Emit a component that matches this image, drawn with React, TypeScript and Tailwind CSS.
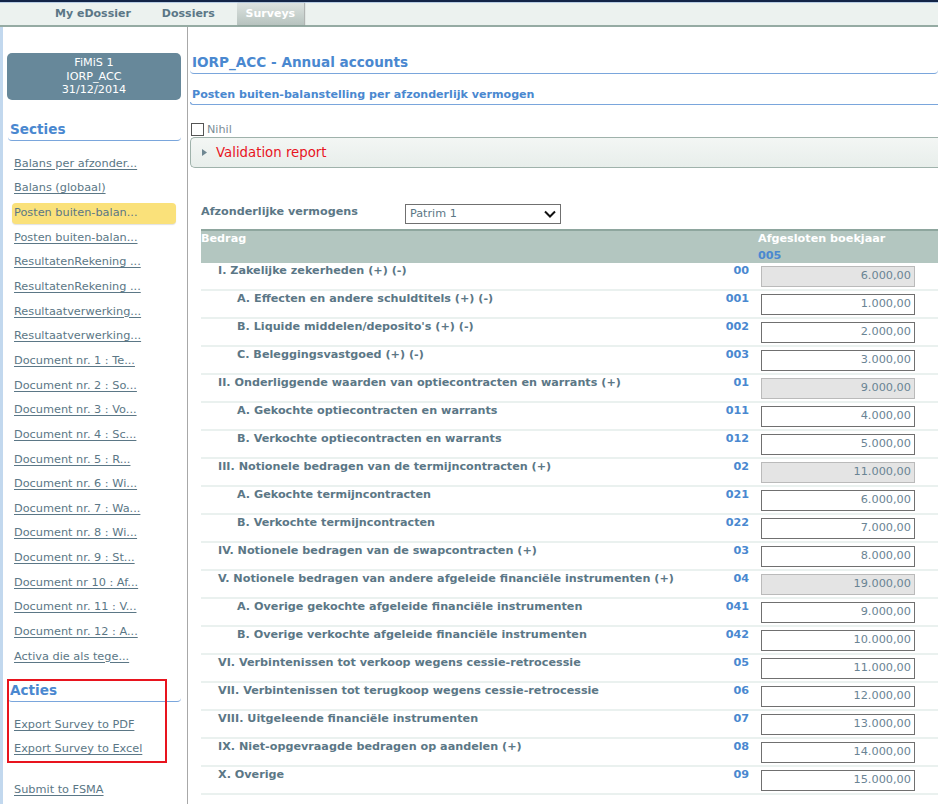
import type { ReactElement } from 'react'

const font = { fontFamily: '"DejaVu Sans", Verdana, sans-serif' }

const sections: string[] = [
  'Balans per afzonder...',
  'Balans (globaal)',
  'Posten buiten-balan...',
  'Posten buiten-balan...',
  'ResultatenRekening ...',
  'ResultatenRekening ...',
  'Resultaatverwerking...',
  'Resultaatverwerking...',
  'Document nr. 1 : Te...',
  'Document nr. 2 : So...',
  'Document nr. 3 : Vo...',
  'Document nr. 4 : Sc...',
  'Document nr. 5 : R...',
  'Document nr. 6 : Wi...',
  'Document nr. 7 : Wa...',
  'Document nr. 8 : Wi...',
  'Document nr. 9 : St...',
  'Document nr 10 : Af...',
  'Document nr. 11 : V...',
  'Document nr. 12 : A...',
  'Activa die als tege...',
]

type Row = { label: string; code: string; value: string; level: 1 | 2; computed?: boolean }

const rows: Row[] = [
  { label: 'I. Zakelijke zekerheden (+) (-)', code: '00', value: '6.000,00', level: 1, computed: true },
  { label: 'A. Effecten en andere schuldtitels (+) (-)', code: '001', value: '1.000,00', level: 2 },
  { label: "B. Liquide middelen/deposito's (+) (-)", code: '002', value: '2.000,00', level: 2 },
  { label: 'C. Beleggingsvastgoed (+) (-)', code: '003', value: '3.000,00', level: 2 },
  { label: 'II. Onderliggende waarden van optiecontracten en warrants (+)', code: '01', value: '9.000,00', level: 1, computed: true },
  { label: 'A. Gekochte optiecontracten en warrants', code: '011', value: '4.000,00', level: 2 },
  { label: 'B. Verkochte optiecontracten en warrants', code: '012', value: '5.000,00', level: 2 },
  { label: 'III. Notionele bedragen van de termijncontracten (+)', code: '02', value: '11.000,00', level: 1, computed: true },
  { label: 'A. Gekochte termijncontracten', code: '021', value: '6.000,00', level: 2 },
  { label: 'B. Verkochte termijncontracten', code: '022', value: '7.000,00', level: 2 },
  { label: 'IV. Notionele bedragen van de swapcontracten (+)', code: '03', value: '8.000,00', level: 1 },
  { label: 'V. Notionele bedragen van andere afgeleide financiële instrumenten (+)', code: '04', value: '19.000,00', level: 1, computed: true },
  { label: 'A. Overige gekochte afgeleide financiële instrumenten', code: '041', value: '9.000,00', level: 2 },
  { label: 'B. Overige verkochte afgeleide financiële instrumenten', code: '042', value: '10.000,00', level: 2 },
  { label: 'VI. Verbintenissen tot verkoop wegens cessie-retrocessie', code: '05', value: '11.000,00', level: 1 },
  { label: 'VII. Verbintenissen tot terugkoop wegens cessie-retrocessie', code: '06', value: '12.000,00', level: 1 },
  { label: 'VIII. Uitgeleende financiële instrumenten', code: '07', value: '13.000,00', level: 1 },
  { label: 'IX. Niet-opgevraagde bedragen op aandelen (+)', code: '08', value: '14.000,00', level: 1 },
  { label: 'X. Overige', code: '09', value: '15.000,00', level: 1 },
]

function Heading({ text, className }: { text: string; className?: string }): ReactElement {
  return (
    <div className={className}>
      <div className="pl-[2px] text-[13.6px] font-bold leading-[16px] text-[#4a88d0]">{text}</div>
      <div className="h-[4px] rounded-b-[4px] border-b border-[#7aa6dc]" />
    </div>
  )
}

function Sidebar(): ReactElement {
  return (
    <aside className="w-[188px] shrink-0 border-l-[3px] border-r border-l-[#c2d8ee] border-r-[#a8a8a8] pb-[10px]">
      <div className="ml-[4px] mt-[26px] flex h-[47px] w-[174px] flex-col items-center justify-center rounded-[5px] bg-[#67889a] text-[11.2px] leading-[13.5px] text-white">
        <span>FiMiS 1</span>
        <span>IORP_ACC</span>
        <span>31/12/2014</span>
      </div>
      <Heading text="Secties" className="ml-[5px] mt-[21px] w-[173px]" />
      <ul className="mt-[11px]">
        {sections.map((s, i) => (
          <li key={i} className="flex h-[24.65px] items-center">
            {i === 2 ? (
              <span className="ml-[9px] flex h-[21px] w-[164px] items-center rounded-[4px] bg-[#fae17a] pl-[2px] text-[11.3px] text-[#5b7786] shadow-[0_1px_1px_rgba(0,0,0,0.12)]">
                {s}
              </span>
            ) : (
              <a href="#" className="ml-[11px] text-[11.3px] text-[#5b7786] underline underline-offset-[2px]">
                {s}
              </a>
            )}
          </li>
        ))}
      </ul>
      <div className="relative ml-[5px] mt-[12px]">
        <Heading text="Acties" className="w-[173px] pt-[1px]" />
        <div className="mt-[11px] flex flex-col">
          <a href="#" className="ml-[6px] flex h-[24px] items-center text-[11.3px] text-[#5b7786] underline underline-offset-[2px]">
            Export Survey to PDF
          </a>
          <a href="#" className="ml-[6px] flex h-[24px] items-center text-[11.3px] text-[#5b7786] underline underline-offset-[2px]">
            Export Survey to Excel
          </a>
        </div>
        <div className="pointer-events-none absolute left-[-1px] top-[-2px] h-[84px] w-[160px] border-2 border-[#e8141e]" />
        <a href="#" className="ml-[6px] mt-[17px] flex h-[24px] items-center text-[11.3px] text-[#5b7786] underline underline-offset-[2px]">
          Submit to FSMA
        </a>
      </div>
    </aside>
  )
}

function NavBar(): ReactElement {
  return (
    <div>
      <div className="h-[2px] bg-[#132547]" />
      <div className="flex h-[25px] items-stretch border-b-2 border-t border-b-[#95aba3] border-t-[#b8cde4] bg-[#ecf2ef] pl-[55px] text-[11px] font-bold text-[#5b7786]">
        <span className="flex items-center pt-[1px]">My eDossier</span>
        <span className="ml-[31px] flex items-center pt-[1px]">Dossiers</span>
        <span className="ml-[22px] flex w-[67px] items-center justify-center bg-gradient-to-b from-[#dde3e0] to-[#b7c3bf] pt-[1px] text-white shadow-[1px_0_1px_rgba(0,0,0,0.25)]">
          Surveys
        </span>
      </div>
    </div>
  )
}

function DataRow({ row }: { row: Row }): ReactElement {
  return (
    <div className="flex h-[28px] items-start border-b-2 border-[#eaf1ef]">
      <div
        className={`flex-1 pt-[1px] text-[11.2px] font-bold leading-[14px] text-[#5b7786] ${
          row.level === 1 ? 'pl-[17px]' : 'pl-[36px]'
        }`}
      >
        {row.label}
      </div>
      <div className="w-[60px] pt-[1px] text-right text-[11.2px] font-bold leading-[14px] text-[#4a88d0]">{row.code}</div>
      <div className="ml-[12px] mt-[3px] w-[154px]">
        <div
          className={`flex h-[21px] items-center justify-end pr-[3px] text-[11.3px] text-[#6a8494] ${
            row.computed ? 'border border-[#bababa] bg-[#e4e4e4]' : 'border border-[#707070] bg-white'
          }`}
        >
          {row.value}
        </div>
      </div>
      <div className="w-[23px]" />
    </div>
  )
}

function Main(): ReactElement {
  return (
    <main className="min-w-0 flex-1 pl-[2px]">
      <Heading text="IORP_ACC - Annual accounts" className="mt-[27px]" />
      <div className="mt-[14px]">
        <div className="pl-[2px] text-[11.1px] font-bold leading-[14px] text-[#4a88d0]">
          Posten buiten-balanstelling per afzonderlijk vermogen
        </div>
        <div className="h-[3px] rounded-bl-[4px] border-b border-l border-[#7aa6dc]" />
      </div>
      <div className="mt-[18px] flex items-end pl-[1px]">
        <span className="h-[13px] w-[13px] border border-[#555]" />
        <span className="ml-[3px] text-[11.2px] leading-[12px] text-[#7b8d95]">Nihil</span>
      </div>
      <div className="mt-[1px] flex h-[31px] items-center rounded-l-[5px] border border-r-0 border-[#9fb2ab] bg-gradient-to-b from-[#f3f6f4] to-[#e8eeeb] pl-[11px]">
        <svg width="5" height="7" viewBox="0 0 5 7">
          <path d="M0 0 L5 3.5 L0 7 Z" fill="#6f8792" />
        </svg>
        <span className="ml-[9px] text-[13.3px] text-[#e8141e]">Validation report</span>
      </div>
      <div className="pl-[11px]">
        <div className="mt-[36px] flex h-[21px] items-start">
          <span className="w-[204px] pt-[1px] text-[11.2px] font-bold leading-[14px] text-[#5b7786]">Afzonderlijke vermogens</span>
          <div className="flex h-[20px] w-[156px] items-center justify-between border border-[#707070] pl-[4px] pr-[4px] text-[11.2px] text-[#5b7786]">
            <span>Patrim 1</span>
            <svg width="12" height="8" viewBox="0 0 12 8">
              <path d="M1 1.5 L6 6.5 L11 1.5" fill="none" stroke="#111" strokeWidth="2" />
            </svg>
          </div>
        </div>
        <div className="mt-[4px] flex h-[34px] border-t-2 border-[#8ea69e] bg-[#b3c6c0]">
          <div className="flex-1 pt-[1px] text-[11.2px] font-bold leading-[14px] text-white">Bedrag</div>
          <div className="w-[180px] pt-[1px] text-[11.2px] font-bold leading-[14px]">
            <div className="text-white">Afgesloten boekjaar</div>
            <div className="mt-[3px] text-[#4a88d0]">005</div>
          </div>
        </div>
        {rows.map((r) => (
          <DataRow key={r.code} row={r} />
        ))}
      </div>
    </main>
  )
}

export default function App(): ReactElement {
  return (
    <div className="h-[804px] w-[938px] overflow-hidden bg-white" style={font}>
      <NavBar />
      <div className="flex">
        <Sidebar />
        <Main />
      </div>
    </div>
  )
}
